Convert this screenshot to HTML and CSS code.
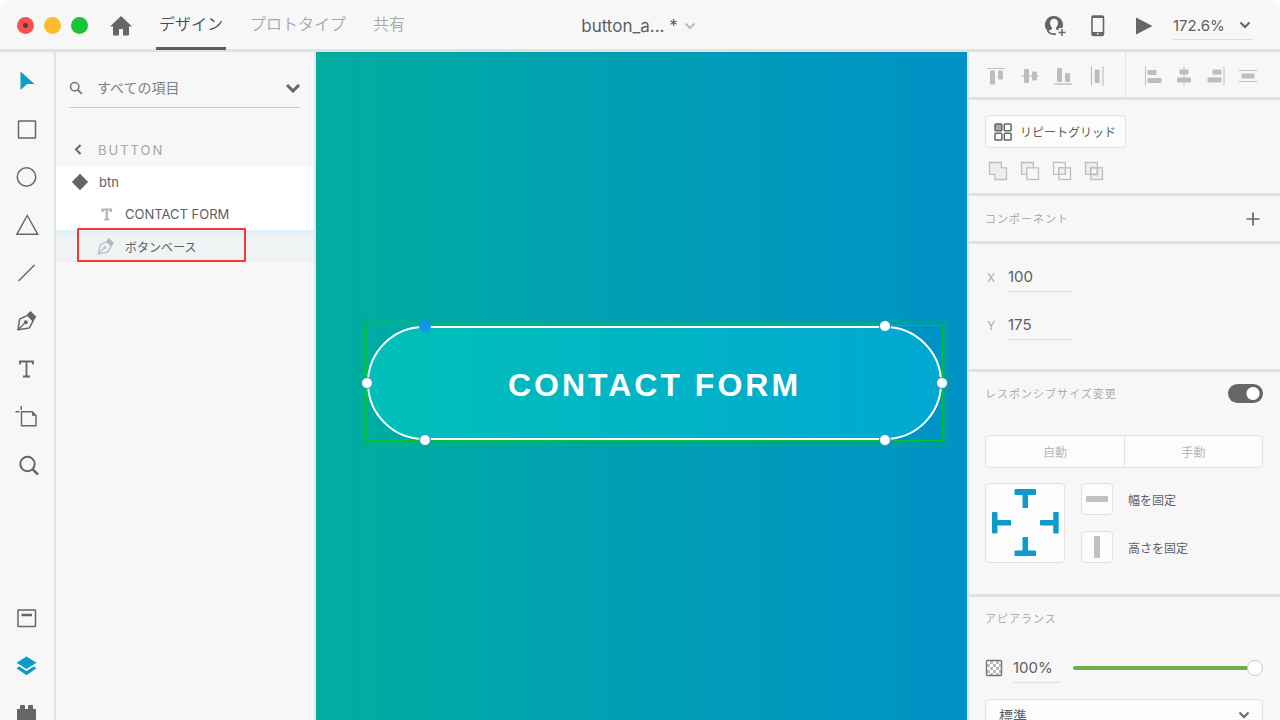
FILE: index.html
```html
<!DOCTYPE html>
<html lang="ja">

<head>
  <meta charset="UTF-8">
  <title>button_a</title>
  <link rel="stylesheet" href="styles.css">
</head>

<body>
  <header class="header">
    <div class="header-left">
      <div class="lights">
        <button class="light light-close" aria-label="閉じる"></button>
        <button class="light light-min" aria-label="最小化"></button>
        <button class="light light-max" aria-label="最大化"></button>
      </div>
      <a class="home" href="#" aria-label="ホーム">
        <svg width="22" height="20" viewBox="0 0 22 20"><path d="M11 0L22 10.500H19V18.500a1 1 0 0 1-1 1H13V13H9v6.500H4a1 1 0 0 1-1-1V10.500H0z" fill="#666"/></svg>
      </a>
      <nav class="tabs">
        <a class="tab tab-active" href="#">デザイン</a>
        <a class="tab" href="#">プロトタイプ</a>
        <a class="tab" href="#">共有</a>
      </nav>
    </div>
    <button class="file-name">button_a... *
      <svg width="12" height="8" viewBox="0 0 12 8"><path d="M1.500 1.500L6 6l4.500-4.500" fill="none" stroke="#bbb" stroke-width="2"/></svg>
    </button>
    <div class="header-right">
      <button class="icon-btn" aria-label="共有">
        <svg width="22" height="22" viewBox="0 0 22 22">
          <path d="M10 1a9 9 0 0 0-6.500 15.300L8 14.300v-1.600C6.500 11.200 6 9.500 6 8c0-2.700 1.500-4.300 4-4.300S14 5.300 14 8c0 1.500-.5 3.200-2 4.700v1.600l2.700 1.100V13h3.800A9 9 0 0 0 10 1z" fill="#666"/>
          <path d="M3.500 16c2 2.500 5 3.600 8.500 2.900M18 14v7M14.500 17.500h7" fill="none" stroke="#666" stroke-width="1.500"/>
        </svg>
      </button>
      <button class="icon-btn" aria-label="デバイスプレビュー">
        <svg width="14" height="22" viewBox="0 0 14 22"><rect x="1" y="1" width="11.500" height="19.500" rx="1.500" fill="none" stroke="#666" stroke-width="1.600"/><path d="M1 17h11.500v3H1zM1 1h11.500v2H1z" fill="#666"/><circle cx="6.800" cy="18.700" r=".9" fill="#f7f7f7"/></svg>
      </button>
      <button class="icon-btn" aria-label="再生">
        <svg width="18" height="18" viewBox="0 0 18 18"><path d="M1 .5L17.500 9 1 17.500z" fill="#666"/></svg>
      </button>
      <div class="drop zoom">
        <select aria-label="ズーム"><option>172.6%</option></select>
        <svg width="12" height="8" viewBox="0 0 12 8"><path d="M1.500 1.500L6 6l4.500-4.500" fill="none" stroke="#666" stroke-width="2"/></svg>
      </div>
    </div>
  </header>

  <div class="workspace">
    <div class="toolbar">
      <button class="tool" aria-label="選択"><svg width="28" height="28" viewBox="0 0 28 28"><path d="M7.500 4.500L21.500 17h-7.300L7.500 23z" fill="#0f9bc8"/></svg></button>
      <button class="tool" aria-label="長方形"><svg width="28" height="28" viewBox="0 0 28 28"><rect x="5.500" y="6" width="17" height="17" rx=".5" fill="none" stroke="#666" stroke-width="1.500"/></svg></button>
      <button class="tool" aria-label="楕円形"><svg width="28" height="28" viewBox="0 0 28 28"><circle cx="13.500" cy="14" r="9.200" fill="none" stroke="#666" stroke-width="1.500"/></svg></button>
      <button class="tool" aria-label="多角形"><svg width="28" height="28" viewBox="0 0 28 28"><path d="M14.300 4.500L24.800 23.300H3.800z" fill="none" stroke="#666" stroke-width="1.400"/></svg></button>
      <button class="tool" aria-label="線"><svg width="28" height="28" viewBox="0 0 28 28"><path d="M5.500 22L21.500 6" fill="none" stroke="#666" stroke-width="1.500"/></svg></button>
      <button class="tool" aria-label="ペン"><svg width="28" height="28" viewBox="0 0 28 28"><path d="M5 22.800L6.600 12.200 14.500 8.300l5.700 5.600-3.900 7z" fill="none" stroke="#666" stroke-width="1.500" stroke-linejoin="round"/><path d="M5 22.800l7.700-7.500" fill="none" stroke="#666" stroke-width="1.200"/><circle cx="12.800" cy="15.200" r="2" fill="#666"/><path d="M14 7.500L17.500 4l5.800 5.800-3 4.500z" fill="#666"/></svg></button>
      <button class="tool" aria-label="テキスト"><svg width="28" height="28" viewBox="0 0 28 28"><path d="M7 9.500V6.500h13v3M13.500 6.500v15M10 21.500h7" fill="none" stroke="#666" stroke-width="1.800"/></svg></button>
      <button class="tool" aria-label="アートボード"><svg width="28" height="28" viewBox="0 0 28 28"><path d="M8.500 8.800h10.800L23 12.500v10.200H8.500z" fill="none" stroke="#666" stroke-width="1.400" stroke-linejoin="round"/><path d="M19 8.500v4.200h4.200z" fill="#666"/><path d="M2.500 8.800h4M8.200 3v4" fill="none" stroke="#666" stroke-width="1.400"/></svg></button>
      <button class="tool" aria-label="ズーム"><svg width="28" height="28" viewBox="0 0 28 28"><circle cx="14.500" cy="13" r="7.200" fill="none" stroke="#666" stroke-width="2"/><path d="M19.800 18.300l4.500 4.500" fill="none" stroke="#666" stroke-width="2.600" stroke-linecap="round"/></svg></button>
      <div class="tool-group">
        <button class="tool" aria-label="アセット"><svg width="28" height="28" viewBox="0 0 28 28"><rect x="5" y="6" width="17.500" height="16.500" rx=".5" fill="none" stroke="#666" stroke-width="1.500"/><path d="M8.500 11h10.500" fill="none" stroke="#666" stroke-width="2.500"/></svg></button>
        <button class="tool" aria-label="レイヤー"><svg width="28" height="28" viewBox="0 0 28 28"><path d="M13.500 4.500l10 6.300-10 6.300-10-6.300z" fill="#0f9bc8"/><path d="M3.500 16.200l2.700-1.700 7.300 4.600 7.300-4.600 2.700 1.700-10 7.100z" fill="#0f9bc8"/></svg></button>
        <button class="tool" aria-label="プラグイン"><svg width="28" height="28" viewBox="0 0 28 28"><path d="M4 9h3V6a1 1 0 0 1 1-1h3a1 1 0 0 1 1 1v3h3V6a1 1 0 0 1 1-1h3a1 1 0 0 1 1 1v3h3v15H4z" fill="#666"/></svg></button>
      </div>
    </div>

    <aside class="layers">
      <div class="drop filter">
        <svg width="14" height="14" viewBox="0 0 14 14"><circle cx="5.700" cy="5.700" r="4.200" fill="none" stroke="#777" stroke-width="1.600"/><path d="M8.800 8.800l4 4" stroke="#777" stroke-width="1.900"/></svg>
        <select aria-label="項目"><option>すべての項目</option></select>
        <svg width="14" height="10" viewBox="0 0 14 10"><path d="M1 2l6 6 6-6" fill="none" stroke="#666" stroke-width="3"/></svg>
      </div>
      <button class="back">
        <svg width="8" height="12" viewBox="0 0 8 12"><path d="M6.500 1L2 5.500 6.500 10" fill="none" stroke="#666" stroke-width="2"/></svg>
        BUTTON
      </button>
      <ul class="layer-list">
        <li class="layer">
          <svg width="18" height="18" viewBox="0 0 18 18"><path d="M9 .8L17.200 9 9 17.200.8 9z" fill="#666"/></svg>
          btn
        </li>
        <li class="layer layer-child">
          <svg width="18" height="18" viewBox="0 0 18 18"><path d="M5.500 7V4.500h8.500V7M9.700 4.500v10M7.200 14.500h5" fill="none" stroke="#b4b4b4" stroke-width="2.200"/></svg>
          CONTACT FORM
        </li>
        <li class="layer layer-child layer-selected">
          <svg width="18" height="18" viewBox="0 0 18 18"><path d="M1.300 17L3.200 8 9.700 4.500l4.500 4.600-3.500 6z" fill="none" stroke="#b3c3cb" stroke-width="1.300"/><path d="M1.300 17l6-6" stroke="#b3c3cb" stroke-width="1.200"/><circle cx="7.800" cy="10.500" r="1.500" fill="#b3c3cb"/><path d="M9 4.200L12 1l5 5-2.600 3.800z" fill="#b5b9bb"/></svg>
          ボタンベース
        </li>
      </ul>
    </aside>

    <main class="canvas">
      <div class="selection">
        <div class="cta">CONTACT FORM</div>
        <span class="handle handle-start handle-on"></span>
        <span class="handle handle-end"></span>
        <span class="handle handle-left"></span>
        <span class="handle handle-right"></span>
        <span class="handle handle-start handle-bottom"></span>
        <span class="handle handle-end handle-bottom"></span>
      </div>
    </main>

    <aside class="inspector">
      <div class="align">
        <div class="align-group">
          <button class="icon-btn" aria-label="上揃え"><svg width="20" height="20" viewBox="0 0 20 20"><path d="M1 2.500h18" stroke="#c0c0c0"/><rect x="4" y="4.500" width="5" height="14" rx="1"/><rect x="12" y="4.500" width="5" height="9" rx="1"/></svg></button>
          <button class="icon-btn" aria-label="中央揃え(垂直)"><svg width="20" height="20" viewBox="0 0 20 20"><path d="M1 10h18" stroke="#c0c0c0"/><rect x="4" y="3" width="5" height="14" rx="1"/><rect x="12" y="5.500" width="5" height="9" rx="1"/></svg></button>
          <button class="icon-btn" aria-label="下揃え"><svg width="20" height="20" viewBox="0 0 20 20"><path d="M1 18h18" stroke="#c0c0c0" stroke-width="1.500"/><rect x="4" y="2" width="5" height="14" rx="1"/><rect x="12" y="7" width="5" height="9" rx="1"/></svg></button>
          <button class="icon-btn" aria-label="水平方向に分布"><svg width="20" height="20" viewBox="0 0 20 20"><path d="M4.500.5v19M16 .5v19" stroke="#c0c0c0" stroke-width="1.200"/><rect x="7.700" y="3.500" width="5" height="13.500" rx="1"/></svg></button>
        </div>
        <div class="align-group">
          <button class="icon-btn" aria-label="左揃え"><svg width="20" height="20" viewBox="0 0 20 20"><path d="M2.500.5v19" stroke="#c0c0c0"/><rect x="4.500" y="4" width="9" height="5" rx="1"/><rect x="4.500" y="12" width="14" height="5" rx="1"/></svg></button>
          <button class="icon-btn" aria-label="中央揃え(水平)"><svg width="20" height="20" viewBox="0 0 20 20"><path d="M10 .5v19" stroke="#c0c0c0"/><rect x="5.500" y="3.500" width="9" height="5" rx="1"/><rect x="3" y="11.500" width="14" height="5" rx="1"/></svg></button>
          <button class="icon-btn" aria-label="右揃え"><svg width="20" height="20" viewBox="0 0 20 20"><path d="M18 .5v19" stroke="#c0c0c0"/><rect x="6.500" y="3.500" width="9" height="5" rx="1"/><rect x="1.500" y="11.500" width="14" height="5" rx="1"/></svg></button>
          <button class="icon-btn" aria-label="垂直方向に分布"><svg width="20" height="20" viewBox="0 0 20 20"><path d="M1 4.500h18M1 15.500h18" stroke="#c0c0c0" stroke-width="1.200"/><rect x="3.500" y="7.500" width="13" height="5" rx="1"/></svg></button>
        </div>
      </div>

      <section class="section section-repeat">
        <button class="repeat">
          <svg width="18" height="18" viewBox="0 0 18 18"><g fill="none" stroke="#666" stroke-width="1.500"><rect x="1" y="1" width="6.800" height="6.800" rx=".8" fill="#aaa"/><rect x="10.300" y="1" width="6.800" height="6.800" rx=".8"/><rect x="1" y="10.300" width="6.800" height="6.800" rx=".8"/><rect x="10.300" y="10.300" width="6.800" height="6.800" rx=".8"/></g></svg>
          リピートグリッド
        </button>
        <div class="bool">
          <button class="icon-btn" aria-label="合体"><svg width="20" height="20" viewBox="0 0 20 20"><path d="M1.500 1.500h11.800v5.300h5.200v11.700H6.800v-5.200H1.500z" fill="#eee" stroke="#bcbfc1" stroke-width="1.300"/></svg></button>
          <button class="icon-btn" aria-label="前面オブジェクトで型抜き"><svg width="20" height="20" viewBox="0 0 20 20"><path d="M6.800 13.300H1.500V1.500h11.800v5.300" fill="#eee" stroke="#bcbfc1" stroke-width="1.300"/><rect x="6.800" y="6.800" width="11.700" height="11.700" fill="#f7f7f7" stroke="#bcbfc1" stroke-width="1.300"/></svg></button>
          <button class="icon-btn" aria-label="交差"><svg width="20" height="20" viewBox="0 0 20 20"><g fill="none" stroke="#bcbfc1" stroke-width="1.300"><rect x="1.500" y="1.500" width="11.800" height="11.800"/><rect x="6.800" y="6.800" width="11.700" height="11.700"/><rect x="6.800" y="6.800" width="6.500" height="6.500" fill="#eee"/></g></svg></button>
          <button class="icon-btn" aria-label="中マド"><svg width="20" height="20" viewBox="0 0 20 20"><g fill="#eee" stroke="#bcbfc1" stroke-width="1.300"><rect x="1.500" y="1.500" width="11.800" height="11.800"/><rect x="6.800" y="6.800" width="11.700" height="11.700"/><rect x="6.800" y="6.800" width="6.500" height="6.500" fill="#f7f7f7" stroke-width="1.800"/></g></svg></button>
        </div>
      </section>

      <section class="section section-component">
        <h2 class="section-title">コンポーネント</h2>
        <button class="icon-btn" aria-label="追加"><svg width="20" height="20" viewBox="0 0 20 20"><path d="M10 3.500v13M3.500 10h13" stroke="#666" stroke-width="1.700"/></svg></button>
      </section>

      <section class="section section-position">
        <div class="field"><label for="pos-x">X</label><input class="value" id="pos-x" type="text" value="100"></div>
        <div class="field"><label for="pos-y">Y</label><input class="value" id="pos-y" type="text" value="175"></div>
      </section>

      <section class="section section-resize">
        <div class="resize-head">
          <h2 class="section-title"><label for="resize">レスポンシブサイズ変更</label></h2>
          <input class="toggle" id="resize" type="checkbox" checked>
        </div>
        <div class="modes">
          <button class="mode">自動</button>
          <button class="mode">手動</button>
        </div>
        <div class="constraints">
          <button class="pin" aria-label="固定位置">
            <svg width="70" height="70" viewBox="0 0 70 70">
              <g fill="#0f9bc8">
                <rect x="24.500" y="1" width="21.500" height="6" rx="1"/><rect x="32.500" y="3" width="5.500" height="17" rx="1"/>
                <rect x="24.500" y="62.500" width="21.500" height="5.500" rx="1"/><rect x="32.500" y="49" width="5.500" height="17" rx="1"/>
                <rect x="2" y="24" width="5.500" height="21.500" rx="1"/><rect x="4" y="32" width="17" height="5.500" rx="1"/>
                <rect x="63.200" y="24" width="5.500" height="21.500" rx="1"/><rect x="50" y="32" width="17" height="5.500" rx="1"/>
              </g>
            </svg>
          </button>
          <div class="fixes">
            <div class="fix">
              <button class="fix-btn" id="fix-w" aria-label="幅を固定"><svg width="24" height="24" viewBox="0 0 24 24"><rect x="1" y="9" width="22" height="6" rx="1" fill="#c0c0c0"/></svg></button>
              <label for="fix-w">幅を固定</label>
            </div>
            <div class="fix">
              <button class="fix-btn" id="fix-h" aria-label="高さを固定"><svg width="24" height="24" viewBox="0 0 24 24"><rect x="9" y="1" width="6" height="22" rx="1" fill="#c0c0c0"/></svg></button>
              <label for="fix-h">高さを固定</label>
            </div>
          </div>
        </div>
      </section>

      <section class="section section-look">
        <h2 class="section-title">アピアランス</h2>
        <div class="opacity">
          <svg width="18" height="18" viewBox="0 0 18 18"><rect x="1.500" y="1.500" width="15" height="15" fill="#fff"/><path d="M5 2h3v3H5zM11 2h3v3h-3zM2 5h3v3H2zM8 5h3v3H8zM14 5h2v3h-2zM5 8h3v3H5zM11 8h3v3h-3zM2 11h3v3H2zM8 11h3v3H8zM14 11h2v3h-2zM5 14h3v2H5zM11 14h3v2h-3z" fill="#bbb"/><rect x="1.500" y="1.500" width="15" height="15" rx="1" fill="none" stroke="#777" stroke-width="1.500"/></svg>
          <input class="value" type="text" value="100%" aria-label="不透明度">
          <input class="slider" type="range" min="0" max="100" value="100" aria-label="不透明度">
        </div>
        <div class="drop blend">
          <select aria-label="描画モード"><option>標準</option></select>
          <svg width="12" height="8" viewBox="0 0 12 8"><path d="M1.500 1.500L6 6l4.500-4.500" fill="none" stroke="#666" stroke-width="2"/></svg>
        </div>
      </section>
    </aside>
  </div>
</body>

</html>
```
FILE: styles.css
```css
* {
  box-sizing: border-box;
}

body {
  margin: 0;
  height: 100vh;
  overflow: hidden;
  display: flex;
  flex-direction: column;
  background-color: #fff;
  color: #5e5e5e;
  font-family: Inter, "Noto Sans CJK JP", sans-serif;
  font-size: 14px;
}

button,
input,
select {
  margin: 0;
  padding: 0;
  border: 0;
  background: none;
  color: inherit;
  font: inherit;
}

svg {
  display: block;
  flex: none;
}

.icon-btn {
  display: flex;
}

/* ドロップダウン共通 */
.drop {
  display: flex;
  align-items: center;
}

.drop select {
  flex: 1;
  min-width: 0;
  appearance: none;
}

/* ヘッダー */
.header {
  flex: none;
  height: 52px;
  display: grid;
  grid-template-columns: 1fr auto 1fr;
  padding: 0 27px 0 17px;
  background-color: #f7f7f7;
  border-top: 1px solid #fbfbfb;
  border-bottom: 3px solid #e2e2e2;
  border-radius: 10px 10px 0 0;
}

.header-left,
.header-right,
.lights,
.tabs {
  display: flex;
  align-items: center;
}

.lights {
  gap: 10px;
}

.light {
  width: 17px;
  height: 17px;
  border-radius: 50%;
}

.light-close {
  background: radial-gradient(circle, #5a3a3a 2px, #fa5050 3px);
}

.light-min {
  background-color: #fdbc2e;
}

.light-max {
  background-color: #16c637;
}

.home {
  margin: 0 24px 0 22px;
}

.tabs {
  align-self: stretch;
  align-items: stretch;
  gap: 21px;
}

.tab {
  padding: 0 3px;
  border-bottom: 3px solid transparent;
  color: #a8a8a8;
  font-size: 16px;
  font-weight: 350;
  line-height: 46px;
  text-decoration: none;
  white-space: nowrap;
}

.tab-active {
  border-color: #5e5e5e;
  color: #4b4b4b;
}

.file-name {
  display: flex;
  align-items: center;
  gap: 6px;
  padding-left: 7px;
  font-size: 17px;
}

.header-right {
  justify-content: flex-end;
}

.header-right .icon-btn {
  margin-right: 25px;
}

.header-right .icon-btn:nth-child(2) {
  margin-right: 30px;
}

.header-right .icon-btn:nth-child(3) {
  margin-right: 20px;
}

.zoom {
  width: 80px;
  height: 28px;
  padding-right: 2px;
  border-bottom: 1px solid #ddd;
  font-size: 15px;
}

/* 本体 */
.workspace {
  flex: 1;
  min-height: 0;
  display: grid;
  grid-template-columns: 56px 260px 1fr 313px;
}

.toolbar {
  display: flex;
  flex-direction: column;
  min-height: 0;
  padding-top: 5px;
  overflow: hidden;
  background-color: #f7f7f7;
  border-right: 2px solid #e2e2e2;
}

.tool {
  flex: none;
  width: 100%;
  height: 48px;
  display: flex;
  align-items: center;
  justify-content: center;
}

.tool-group {
  margin-top: auto;
  margin-bottom: -18px;
}

/* レイヤー */
.layers {
  background-color: #f7f7f7;
  border-right: 2px solid #e6e6e6;
}

.filter {
  height: 40px;
  margin: 16px 14px 26px 13px;
  gap: 14px;
  border-bottom: 1px solid #ccc;
  color: #808080;
}

.back {
  display: flex;
  align-items: center;
  gap: 16px;
  height: 32px;
  padding-left: 18px;
  color: #a5a5a5;
  font-size: 13px;
  letter-spacing: 2px;
}

.layer-list {
  margin: 0;
  padding: 0;
  list-style: none;
  font-size: 13px;
}

.layer {
  height: 32px;
  display: flex;
  align-items: center;
  gap: 10px;
  padding-left: 15px;
  background-color: #fff;
}

.layer-child {
  padding-left: 41px;
}

.layer-selected {
  position: relative;
  background-color: #eff3f3;
  box-shadow: inset 0 5px #e5f1f8;
  font-size: 12px;
}

/* 選択中レイヤーの赤枠 */
.layer-selected::after {
  content: "";
  position: absolute;
  top: -2px;
  bottom: 0;
  left: 21px;
  width: 165px;
  border: 2px solid #fa3534;
  border-radius: 1px;
}

/* キャンバス */
.canvas {
  position: relative;
  overflow: hidden;
  background: linear-gradient(to right, #00ae9f, #009eb6 52%, #0092c6 98%);
}

.selection {
  position: absolute;
  top: 273px;
  left: 50px;
  width: 577px;
  height: 116px;
  border: 1px solid #00c832;
  box-shadow: 0 0 0 6px rgba(0, 190, 70, 0.2);
}

.cta {
  height: 100%;
  display: flex;
  align-items: center;
  justify-content: center;
  padding-top: 4px;
  border: 2px solid #fff;
  border-radius: 57px;
  background: linear-gradient(to right, #00c0b8, #00a8d2);
  color: #fff;
  font: bold 32px "Liberation Sans", sans-serif;
  letter-spacing: 3px;
}

.handle {
  position: absolute;
  width: 12px;
  height: 12px;
  border: 1px solid #1493dc;
  border-radius: 50%;
  background-color: #fff;
  transform: translate(-50%, -50%);
}

.handle-on {
  background-color: #1493ec;
}

.handle-start {
  top: 0;
  left: 10%;
}

.handle-end {
  top: 0;
  left: 90%;
}

.handle-left {
  top: 50%;
  left: 0;
}

.handle-right {
  top: 50%;
  left: 100%;
}

.handle-bottom {
  top: 100%;
}

/* プロパティ */
.inspector {
  overflow: hidden;
  background-color: #f7f7f7;
  border-left: 2px solid #e2e2e2;
}

.align {
  display: grid;
  grid-template-columns: 1fr 1fr;
  border-bottom: 3px solid #e2e2e2;
}

.align-group {
  height: 45px;
  display: flex;
  align-items: center;
  justify-content: space-between;
  padding: 2px 18px 0 17px;
}

.align-group + .align-group {
  padding-right: 22px;
  border-left: 1px solid #e2e2e2;
}

.align-group svg {
  fill: #bdbdbd;
}

.section {
  padding: 15px 17px 0 16px;
  border-bottom: 3px solid #e2e2e2;
}

.section-title {
  margin: 0;
  color: #a5a5a5;
  font-size: 11px;
  font-weight: 350;
  letter-spacing: 1px;
  line-height: 18px;
}

.repeat {
  display: flex;
  align-items: center;
  gap: 8px;
  height: 33px;
  padding: 0 9px 0 8px;
  border: 1px solid #e2e2e2;
  border-radius: 4px;
  background-color: #fcfcfc;
  font-size: 12px;
}

.bool {
  display: flex;
  gap: 12px;
  padding: 13px 3px 12px;
}

.section-component,
.resize-head {
  display: flex;
  align-items: center;
  justify-content: space-between;
}

.section-component {
  padding-top: 13px;
  padding-bottom: 12px;
}

.section-position {
  padding-top: 18px;
  padding-bottom: 29px;
}

.field {
  display: flex;
  align-items: center;
  gap: 12px;
  padding-left: 2px;
}

.field + .field {
  margin-top: 18px;
}

.field label {
  width: 9px;
  color: #aaa;
  font-size: 12px;
}

.value {
  width: 64px;
  height: 30px;
  border-bottom: 1px solid #e0e0e0;
  font-size: 15px;
}

.section-resize {
  padding-top: 12px;
  padding-bottom: 31px;
}

.toggle {
  width: 35px;
  height: 19px;
  border-radius: 10px;
  background: radial-gradient(circle at 25px 50%, #fff 6px, #666 7px);
  appearance: none;
}

.modes {
  display: grid;
  grid-template-columns: 1fr 1fr;
  height: 33px;
  margin: 32px 0 15px;
  border: 1px solid #e2e2e2;
  border-radius: 4px;
  background-color: #fcfcfc;
}

.mode {
  color: #b8b8b8;
  font-size: 12px;
}

.mode + .mode {
  border-left: 1px solid #e2e2e2;
}

.constraints {
  display: flex;
  gap: 16px;
}

.pin {
  width: 80px;
  height: 80px;
  display: flex;
  align-items: center;
  justify-content: center;
}

.pin,
.fix-btn,
.blend {
  border: 1px solid #e2e2e2;
  border-radius: 4px;
  background-color: #fcfcfc;
}

.fixes {
  display: flex;
  flex-direction: column;
  justify-content: space-between;
}

.fix {
  display: flex;
  align-items: center;
  gap: 15px;
  font-size: 12px;
}

.fix-btn {
  width: 32px;
  height: 32px;
  display: flex;
  align-items: center;
  justify-content: center;
}

.section-look {
  padding-top: 13px;
}

.opacity {
  display: flex;
  align-items: center;
  margin: 25px 0 16px;
}

.opacity .value {
  width: 48px;
  margin: 0 12px 0 10px;
}

.slider {
  flex: 1;
  min-width: 0;
  height: 16px;
  appearance: none;
}

.slider::-webkit-slider-runnable-track {
  height: 4px;
  border-radius: 2px;
  background-color: #6dae47;
}

.slider::-webkit-slider-thumb {
  width: 16px;
  height: 16px;
  margin-top: -6px;
  border: 1px solid #ccc;
  border-radius: 50%;
  background-color: #fff;
  appearance: none;
}

.blend {
  height: 32px;
  padding: 0 12px 0 13px;
}
```
